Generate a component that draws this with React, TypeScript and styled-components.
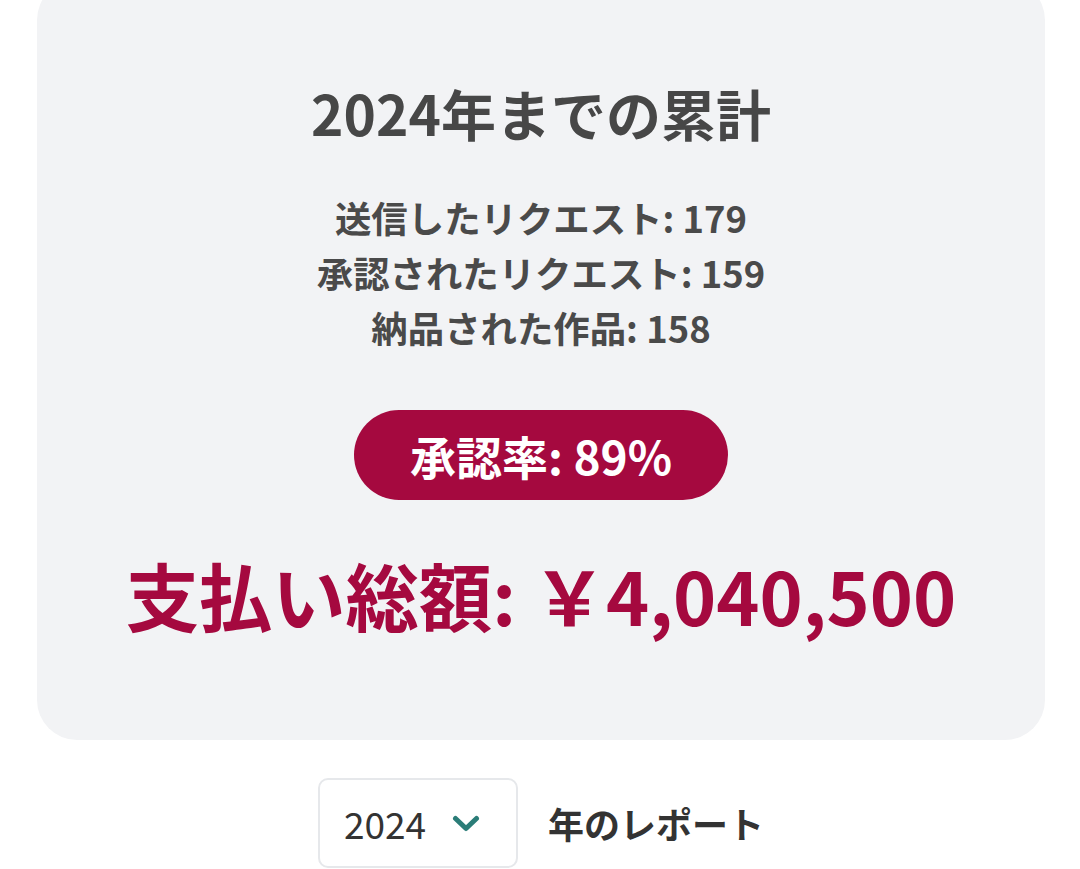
import React, { FunctionComponent } from "react";
import styled, { createGlobalStyle } from "styled-components";

const GlobalStyle = createGlobalStyle`
  html, body {
    margin: 0;
    padding: 0;
    background: #ffffff;
    font-family: "Noto Sans CJK JP", "Noto Sans", sans-serif;
  }
`;

const Page = styled.main`
  padding: 0 35px 0 37px;
  overflow: hidden;
  height: 869px;
  box-sizing: border-box;
`;

const SummaryCard = styled.section`
  margin-top: -20px;
  background: #f2f3f5;
  border-radius: 40px;
  padding: 92px 24px 92px;
  display: flex;
  flex-direction: column;
  align-items: center;
  text-align: center;
`;

const Title = styled.h1`
  margin: 0;
  font-size: 55px;
  line-height: 81px;
  font-weight: 700;
  color: #474747;
`;

const StatList = styled.ul`
  list-style: none;
  margin: 37px 0 0;
  padding: 0;
`;

const StatItem = styled.li`
  font-size: 36.4px;
  line-height: 55px;
  font-weight: 700;
  color: #4a4a4a;
`;

const RatePill = styled.div`
  margin-top: 55px;
  height: 90px;
  padding: 0 56px;
  border-radius: 45px;
  background: #a5093f;
  color: #ffffff;
  display: inline-flex;
  align-items: center;
  font-size: 46px;
  font-weight: 700;
`;

const Total = styled.p`
  margin: 40px 0 0;
  font-size: 73.3px;
  line-height: 108px;
  font-weight: 700;
  color: #a5093f;
  white-space: nowrap;
`;

const ReportRow = styled.div`
  margin-top: 38px;
  display: flex;
  align-items: center;
  justify-content: center;
  gap: 30px;
`;

const YearSelect = styled.div`
  width: 200px;
  height: 90px;
  box-sizing: border-box;
  border: 2px solid #e6e8eb;
  border-radius: 10px;
  background: #ffffff;
  display: flex;
  align-items: center;
  justify-content: space-between;
  padding: 0 36px 0 24px;
  font-size: 37px;
  font-weight: 400;
  color: #333333;
`;

const ReportLabel = styled.span`
  font-size: 36px;
  font-weight: 700;
  color: #333333;
`;

const Chevron: FunctionComponent = () => (
  <svg width="28" height="17" viewBox="0 0 28 17" fill="none">
    <path
      d="M3.5 3.5 L14 13.5 L24.5 3.5"
      stroke="#2b7d78"
      strokeWidth="5"
      strokeLinecap="round"
      strokeLinejoin="round"
    />
  </svg>
);

const stats = [
  { label: "送信したリクエスト", value: 179 },
  { label: "承認されたリクエスト", value: 159 },
  { label: "納品された作品", value: 158 },
];

const App: FunctionComponent = () => {
  return (
    <>
      <GlobalStyle />
      <Page>
        <SummaryCard>
          <Title>2024年までの累計</Title>
          <StatList>
            {stats.map((stat) => (
              <StatItem key={stat.label}>
                {stat.label}: {stat.value}
              </StatItem>
            ))}
          </StatList>
          <RatePill>承認率: 89%</RatePill>
          <Total>支払い総額: ￥4,040,500</Total>
        </SummaryCard>
        <ReportRow>
          <YearSelect>
            <span>2024</span>
            <Chevron />
          </YearSelect>
          <ReportLabel>年のレポート</ReportLabel>
        </ReportRow>
      </Page>
    </>
  );
};

export default App;
